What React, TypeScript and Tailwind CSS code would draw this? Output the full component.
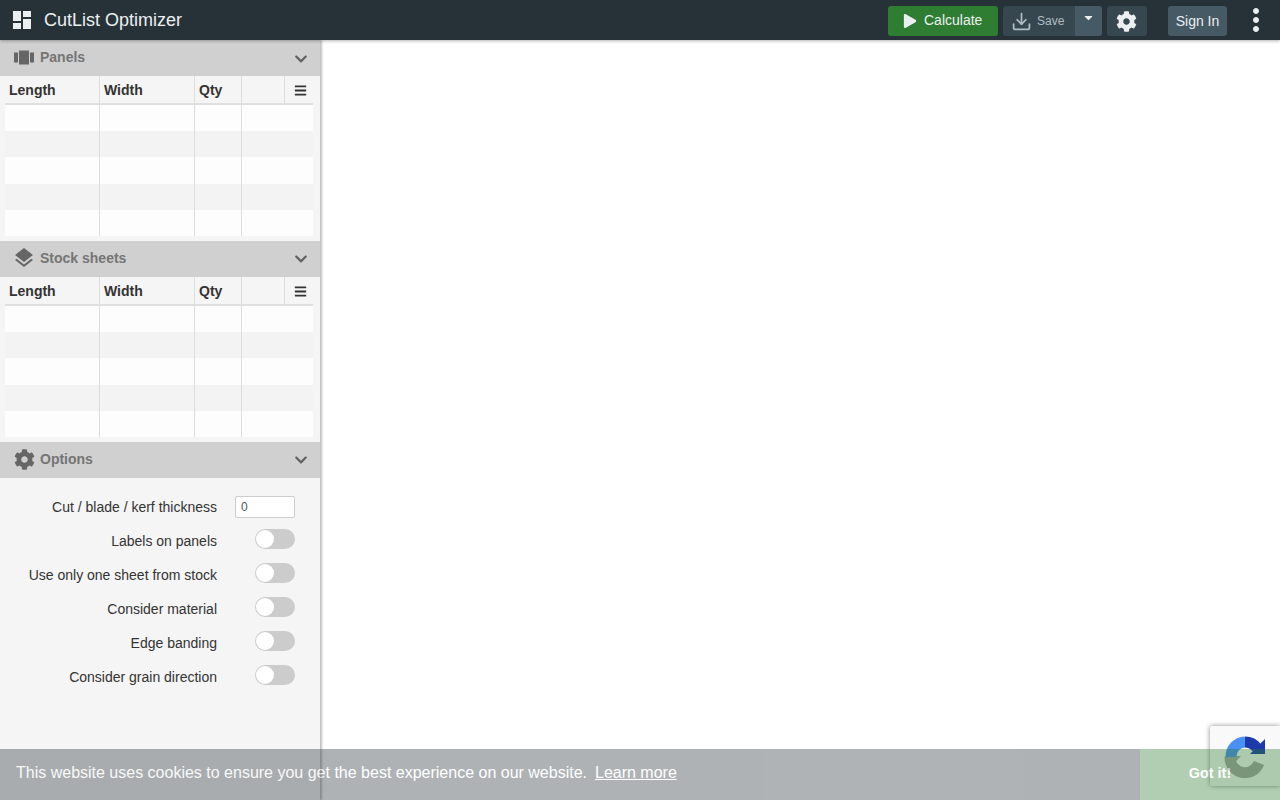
import { Download } from 'lucide-react';
import type { ReactNode } from 'react';
import { FaBars, FaCaretDown, FaChevronDown, FaCog, FaPlay } from 'react-icons/fa';
import { MdDashboard, MdLayers, MdMoreVert, MdViewCarousel } from 'react-icons/md';

const FONT = "font-['Liberation_Sans',Arial,sans-serif]";

const SectionHeader = ({ icon, title }: { icon: ReactNode; title: string }) => (
  <div className="flex h-9 shrink-0 items-center bg-[#d0d0d0] pb-[1px] pl-[12px] pr-[13px]">
    <span className="flex w-6 justify-center text-[#666666]">{icon}</span>
    <span className="ml-1 text-[14px] font-bold text-[#757575]">{title}</span>
    <FaChevronDown className="ml-auto mr-[-1px] mt-[2px] text-[#616161]" size={14} />
  </div>
);

const SheetTable = () => (
  <div className="flex flex-col">
    <div className="flex h-[29px] pl-[5px]">
      <div className="flex w-[308px] border-b-2 border-[#e0e0e0] text-[14px] font-bold leading-[28px] text-[#333333]">
        <div className="w-[95px] border-r border-[#dddddd] pl-[4px]">Length</div>
        <div className="w-[95px] border-r border-[#dddddd] pl-[4px]">Width</div>
        <div className="w-[47px] border-r border-[#dddddd] pl-[4px]">Qty</div>
        <div className="w-[43px] border-r border-[#dddddd]" />
        <div className="flex flex-1 items-center pl-[9px] pt-[2px]">
          <FaBars className="text-[#333333]" size={13} />
        </div>
      </div>
    </div>
    {[0, 1, 2, 3, 4].map((row) => (
      <div key={row} className="flex h-[26.2px] pl-[5px]">
        <div className={`flex w-[308px] ${row % 2 === 0 ? 'bg-[#fdfdfd]' : 'bg-[#f3f3f3]'}`}>
          <div className="w-[95px] border-r border-[#dddddd]" />
          <div className="w-[95px] border-r border-[#dddddd]" />
          <div className="w-[47px] border-r border-[#dddddd]" />
        </div>
      </div>
    ))}
  </div>
);

const Toggle = () => (
  <div className="ml-auto flex h-5 w-10 items-center rounded-full bg-[#cccccc] pl-px">
    <div className="size-[18px] rounded-full bg-white" />
  </div>
);

const OptionRow = ({ label, children }: { label: string; children: ReactNode }) => (
  <div className="flex h-[34px] items-center">
    <div className="w-[217px] pt-[2px] text-right text-[14px] text-[#333333]">{label}</div>
    <div className="ml-[18px] w-[60px]">{children}</div>
  </div>
);

const RecaptchaLogo = () => (
  <svg width="44" height="44" viewBox="0 0 44 44" fill="none">
    <path d="M36 29 A15 15 0 0 1 7 23" stroke="#a6a6a6" strokeWidth="11" />
    <path d="M2 22 L18 22 L5 36 Z" fill="#a6a6a6" />
    <path d="M8 23 A14.5 14.5 0 0 1 22 8" stroke="#4a90f5" strokeWidth="11" />
    <path d="M22 8 A15 15 0 0 1 34 14" stroke="#1c3aa9" strokeWidth="11" />
    <path d="M42 5 L42 20 L27 20 Z" fill="#1c3aa9" />
  </svg>
);

const App = () => {
  return (
    <div className={`relative flex h-screen flex-col overflow-hidden bg-white ${FONT}`}>
      <header className="z-10 flex h-10 shrink-0 items-center bg-[#263238] shadow-[0_1px_3px_rgba(0,0,0,0.3)]">
        <MdDashboard className="ml-[10px] text-[#eceff1]" size={24} />
        <span className="ml-[10px] text-[18px] text-[#eceff1]">CutList Optimizer</span>

        <button className="ml-auto mt-[2px] flex h-[30px] w-[110px] items-center rounded-[3px] bg-[#2e7d32] pl-[15px] text-[#eceff1]">
          <FaPlay size={14} />
          <span className="mb-[2px] ml-[7px] text-[14px]">Calculate</span>
        </button>
        <div className="ml-[5px] mt-[2px] flex h-[30px] w-[99px] overflow-hidden rounded-[3px] bg-[#37474f] text-[#b0bec5]">
          <div className="flex w-[72px] items-center pl-2">
            <Download size={21} strokeWidth={2} />
            <span className="ml-[5px] text-[12px]">Save</span>
          </div>
          <div className="flex flex-1 items-start justify-center bg-[#455a64] pt-[5px] text-[#eceff1]">
            <FaCaretDown size={13} />
          </div>
        </div>
        <button className="ml-[5px] mt-[2px] flex h-[30px] w-10 items-center justify-center rounded-[3px] bg-[#37474f] pr-[2px] text-[#eceff1]">
          <FaCog size={21} />
        </button>
        <button className="ml-[21px] mt-[2px] flex h-[30px] w-[59px] items-center justify-center rounded-[3px] bg-[#455a64] text-[14px] text-[#eceff1]">
          Sign In
        </button>
        <MdMoreVert className="ml-[11px] mr-[6px] text-[#eceff1]" size={36} />
      </header>

      <div className="flex min-h-0 flex-1">
        <aside className="relative z-[1] flex w-[320px] shrink-0 flex-col bg-[#f5f5f5] shadow-[2px_0_2px_rgba(0,0,0,0.25)]">
          <SectionHeader icon={<MdViewCarousel size={25} />} title="Panels" />
          <SheetTable />
          <div className="h-[5px] shrink-0" />
          <SectionHeader icon={<MdLayers size={24} />} title="Stock sheets" />
          <SheetTable />
          <div className="h-[5px] shrink-0" />
          <SectionHeader icon={<FaCog size={21} />} title="Options" />
          <div className="flex flex-col pt-3">
            <OptionRow label="Cut / blade / kerf thickness">
              <div className="h-[22px] rounded-[2px] border border-[#cccccc] bg-white pl-[5px] text-[12px] leading-[20px] text-[#555555]">
                0
              </div>
            </OptionRow>
            {['Labels on panels', 'Use only one sheet from stock', 'Consider material', 'Edge banding', 'Consider grain direction'].map(
              (label) => (
                <OptionRow key={label} label={label}>
                  <div className="-mt-1">
                    <Toggle />
                  </div>
                </OptionRow>
              ),
            )}
          </div>
        </aside>
        <main className="flex-1 bg-white" />
      </div>

      {/* recaptcha badge sits under the cookie bar */}
      <div className="absolute bottom-[14px] right-0 z-[2] flex h-[60px] w-[70px] items-center rounded-l-[2px] bg-[#f9f9f9] pl-[13px] shadow-[0_0_5px_rgba(128,128,128,0.9)]">
        <RecaptchaLogo />
      </div>

      {/* cookie bar, whole thing is faded */}
      <div className="absolute inset-x-0 bottom-0 z-[3] flex h-[51px] items-center bg-[#263238] text-white opacity-[0.37]">
        <span className="mb-[3px] ml-4 text-[16px]">This website uses cookies to ensure you get the best experience on our website.</span>
        <a className="mb-[3px] ml-[8px] text-[16px] underline">Learn more</a>
        <div className="ml-auto flex h-full w-[140px] items-center justify-center bg-[#2e7d32] pb-[2px] text-[14.4px] font-bold">Got it!</div>
      </div>
    </div>
  );
};

export default App;
